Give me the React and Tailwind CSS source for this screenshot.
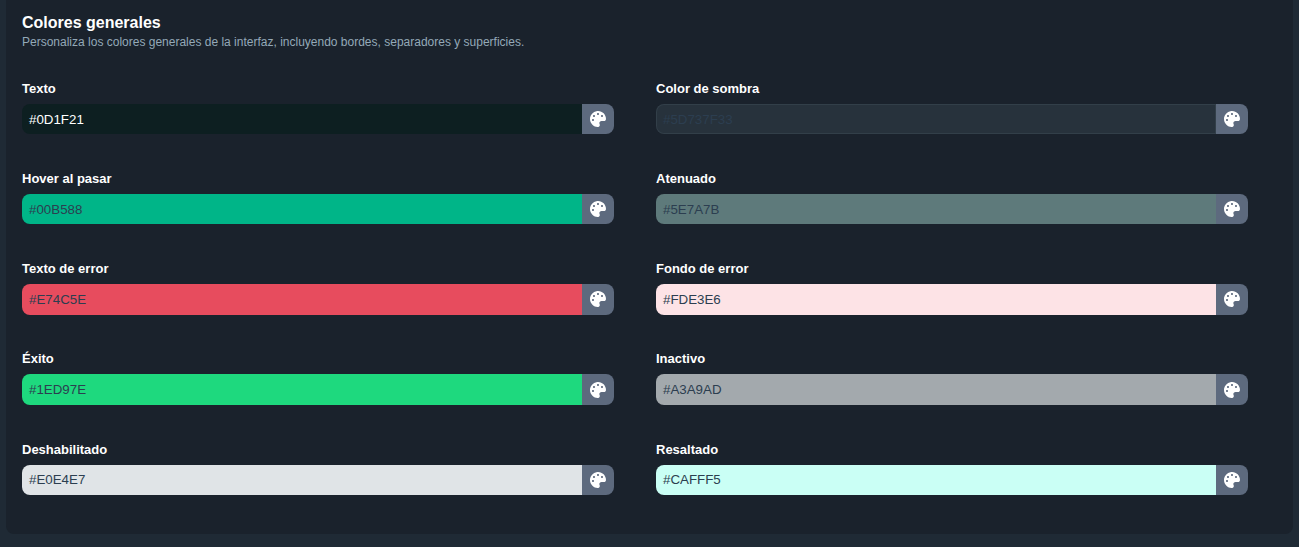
import { FaPalette } from 'react-icons/fa';

const leftFields = [
  { label: 'Texto', value: '#0D1F21', bg: 'bg-[#0D1F21]', text: 'text-white' },
  { label: 'Hover al pasar', value: '#00B588', bg: 'bg-[#00B588]', text: 'text-[#2C3E50]' },
  { label: 'Texto de error', value: '#E74C5E', bg: 'bg-[#E74C5E]', text: 'text-[#2C3E50]' },
  { label: 'Éxito', value: '#1ED97E', bg: 'bg-[#1ED97E]', text: 'text-[#2C3E50]' },
  { label: 'Deshabilitado', value: '#E0E4E7', bg: 'bg-[#E0E4E7]', text: 'text-[#2C3E50]' },
];

const rightFields = [
  { label: 'Color de sombra', value: '#5D737F33', bg: 'bg-[#5D737F33] shadow-[inset_0_0_0_1px_#5D737F33]', text: 'text-[#2C3E50]' },
  { label: 'Atenuado', value: '#5E7A7B', bg: 'bg-[#5E7A7B]', text: 'text-[#2C3E50]' },
  { label: 'Fondo de error', value: '#FDE3E6', bg: 'bg-[#FDE3E6]', text: 'text-[#2C3E50]' },
  { label: 'Inactivo', value: '#A3A9AD', bg: 'bg-[#A3A9AD]', text: 'text-[#2C3E50]' },
  { label: 'Resaltado', value: '#CAFFF5', bg: 'bg-[#CAFFF5]', text: 'text-[#2C3E50]' },
];

function ColorField({ field }) {
  return (
    <div className="w-[592px]">
      <label className="block text-[13px] leading-[18px] font-bold text-white mb-[6px]">{field.label}</label>
      <div className="flex h-[30.4px]">
        <div className={`flex-1 flex items-center pl-[7px] pt-px text-[13.33px] rounded-l-lg ${field.bg} ${field.text}`}>
          {field.value}
        </div>
        <button className="w-8 flex items-center justify-center bg-[#5D6A7E] text-white rounded-r-lg">
          <FaPalette className="text-[16px]" />
        </button>
      </div>
    </div>
  );
}

export default function App() {
  return (
    <div className="h-[547px] overflow-hidden bg-[#1F2A35] px-[6px] font-['Liberation_Sans',Arial,sans-serif]">
      <div className="-mt-2 h-[542px] bg-[#1A222C] rounded-lg pt-[21px] pl-4">
        <h2 className="text-base leading-5 font-bold text-white">Colores generales</h2>
        <p className="text-xs leading-4 mt-px text-[#94A9B8]">
          Personaliza los colores generales de la interfaz, incluyendo bordes, separadores y superficies.
        </p>
        <div className="flex gap-[42px] mt-[29.85px]">
          <div className="flex flex-col gap-[35.8px]">
            {leftFields.map((field) => (
              <ColorField key={field.label} field={field} />
            ))}
          </div>
          <div className="flex flex-col gap-[35.8px]">
            {rightFields.map((field) => (
              <ColorField key={field.label} field={field} />
            ))}
          </div>
        </div>
      </div>
    </div>
  );
}
